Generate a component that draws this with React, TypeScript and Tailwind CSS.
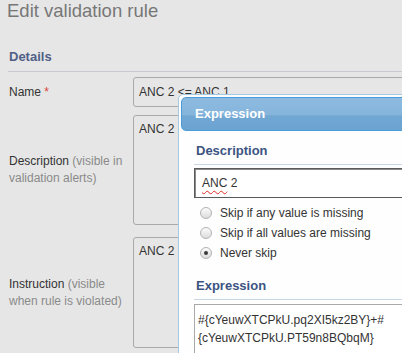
export default function App() {
  const radios = [
    { label: "Skip if any value is missing", checked: false },
    { label: "Skip if all values are missing", checked: false },
    { label: "Never skip", checked: true },
  ];

  return (
    <div className="relative h-[353px] w-[402px] overflow-hidden bg-[#e6e6e6] font-['Liberation_Sans',Arial,sans-serif] text-[12px] text-[#333]">
      <div className="w-[640px] pl-[8px]">
        <h1 className="-ml-[1px] text-[18.5px] leading-[22px] text-[#777]">Edit validation rule</h1>

        {/* Details */}
        <div className="mt-[27px] border-b border-[#c9c9d2] pb-[6px] pl-[1px] text-[13px] font-bold leading-[16px] text-[#505f88]">
          Details
        </div>

        <div className="mt-[5px] flex items-center">
          <div className="w-[125px] pl-[1px] leading-[17px]">
            Name <span className="text-[#d9453b]">*</span>
          </div>
          <div className="h-[30px] flex-1 rounded-[3px] border border-[#a9a9a9] px-[5px] leading-[28px]">
            ANC 2 &lt;= ANC 1
          </div>
        </div>

        <div className="mt-[8px] flex items-center">
          <div className="w-[125px] whitespace-nowrap pl-[1px] leading-[17px]">
            Description <span className="text-[#8a8a8a]">(visible in</span>
            <br />
            <span className="text-[#8a8a8a]">validation alerts)</span>
          </div>
          <div className="h-[110px] flex-1 rounded-[3px] border border-[#a9a9a9] px-[5px] pt-[5px] leading-[17px]">
            ANC 2
          </div>
        </div>

        <div className="mt-[12px] flex items-center">
          <div className="w-[125px] whitespace-nowrap pl-[1px] leading-[17px]">
            Instruction <span className="text-[#8a8a8a]">(visible</span>
            <br />
            <span className="text-[#8a8a8a]">when rule is violated)</span>
          </div>
          <div className="h-[111px] flex-1 rounded-[3px] border border-[#a9a9a9] px-[5px] pt-[5px] leading-[17px]">
            ANC 2
          </div>
        </div>
      </div>

      {/* Expression dialog */}
      <div className="absolute left-[178px] top-[94px] h-[280px] w-[280px] rounded-t-[5px] border border-[#a6c9e2] bg-[#fefefe] p-[2px]">
        <div className="h-[34px] rounded-[5px] border border-[#4a9bd9] bg-[linear-gradient(to_bottom,#8dbadf_0%,#86b5dc_52%,#72a7d3_56%,#6ba3d1_100%)] pl-[13px] text-[13px] font-bold leading-[32px] text-white">
          Expression
        </div>

        <div className="px-[13px]">
          <div className="mt-[12px] border-b border-[#c8d7e6] pb-[5px] pl-[2px] text-[13px] font-bold leading-[16px] text-[#3b5482]">
            Description
          </div>
          <div className="mt-[3px] h-[30px] border border-[#5a5a5a] bg-white pl-[7px] leading-[28px] shadow-[inset_1px_1px_0_#8a8a8a]">
            <span className="underline decoration-[#e0302a] decoration-wavy decoration-1 underline-offset-[3px]">ANC</span> 2
          </div>

          <div className="mt-[5px]">
            {radios.map((r) => (
              <div key={r.label} className="flex h-[20px] items-center">
                <span className="ml-[6px] flex h-[12px] w-[12px] items-center justify-center rounded-full border border-[#b3b3b3] bg-[linear-gradient(to_bottom,#fbfbfb,#dcdcdc)]">
                  {r.checked && <span className="h-[4px] w-[4px] rounded-full bg-[#3a3a3a]" />}
                </span>
                <span className="ml-[8px] leading-[17px]">{r.label}</span>
              </div>
            ))}
          </div>

          <div className="mt-[15px] border-b border-[#c8d7e6] pb-[5px] pl-[2px] text-[13px] font-bold leading-[16px] text-[#3b5482]">
            Expression
          </div>
          <div className="mt-[4px] h-[80px] border border-[#a9a9a9] bg-white pl-[3px] pt-[6px] leading-[18px]">
            <div>#{"{"}cYeuwXTCPkU.pq2XI5kz2BY{"}"}+#</div>
            <div>{"{"}cYeuwXTCPkU.PT59n8BQbqM{"}"}</div>
          </div>
        </div>
      </div>
    </div>
  );
}
